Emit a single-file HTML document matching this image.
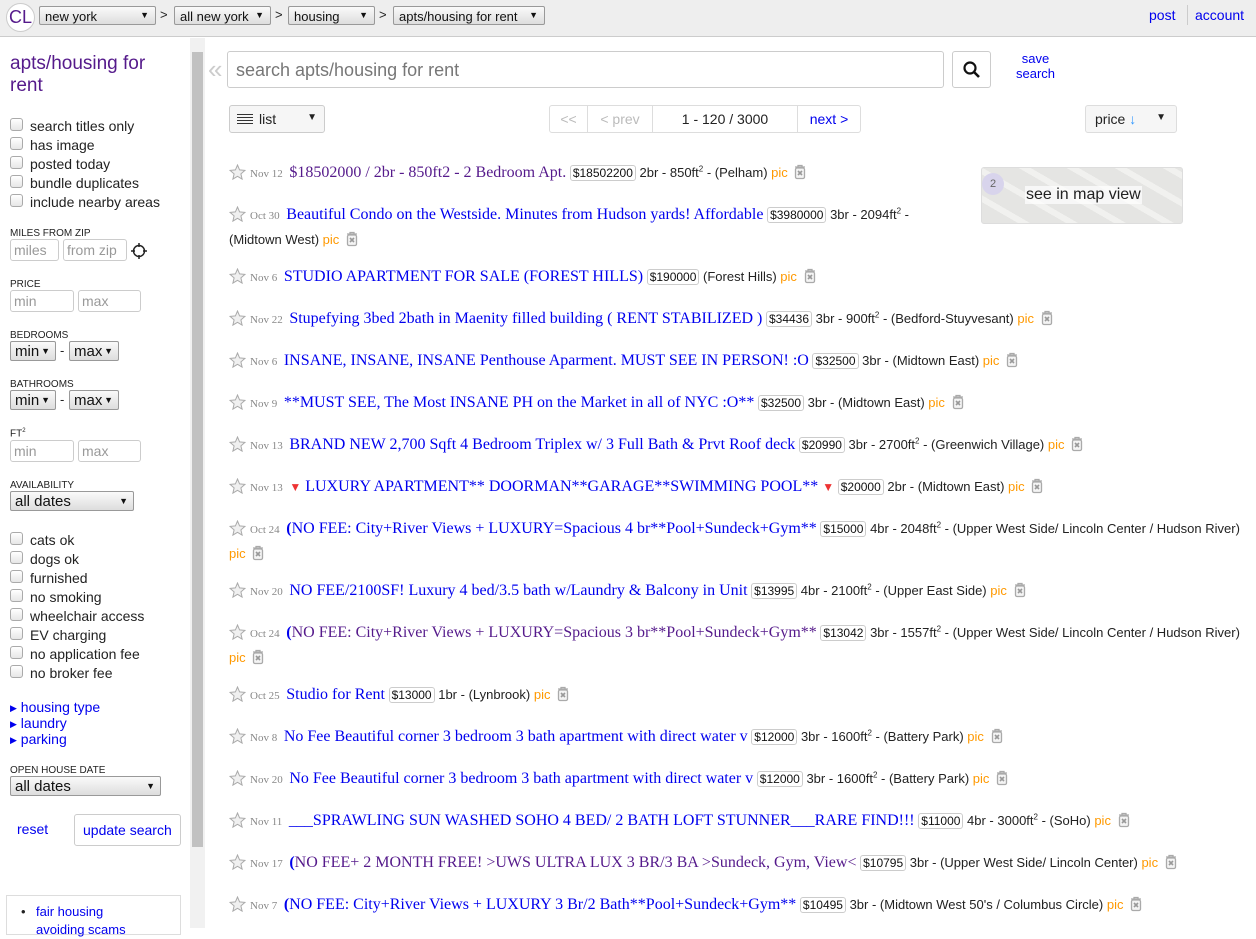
<!DOCTYPE html>
<html><head><meta charset="utf-8"><style>
*{box-sizing:border-box}
body{margin:0;width:1256px;height:928px;overflow:hidden;background:#fff;font-family:"Liberation Sans",sans-serif;color:#222;position:relative}
.a{position:absolute}
.hdr{left:0;top:0;width:1256px;height:37px;background:#eee;border-bottom:1px solid #ccc}
.sel{position:absolute;top:6px;height:19px;border:1px solid #999;border-radius:2px;background:linear-gradient(#fafafa,#ddd);font-size:13px;padding:2px 0 0 5px;color:#111}
.sel:after{content:"▼";position:absolute;right:6px;top:3px;font-size:9px}
.gt{position:absolute;top:7px;font-size:13px}
.blue{color:#00e}
.lbl{position:absolute;left:10px;font-size:10px;color:#222}
.inp{position:absolute;height:22px;border:1px solid #ccc;border-radius:3px;font-size:14px;color:#999;padding:2px 0 0 3px}
.ss{position:absolute;height:20px;border:1px solid #999;border-radius:2px;background:linear-gradient(#fafafa,#ddd);font-size:15px;padding:1px 0 0 4px;color:#111}
.ss:after{content:"▼";position:absolute;right:5px;top:4px;font-size:9px}
.cb{position:absolute;left:10px;width:13px;height:13px;border:1px solid #aaa;border-radius:3px;background:linear-gradient(#fff,#e6e6e6)}
.ct{position:absolute;left:30px;font-size:14px;color:#222}
.row{position:absolute;left:229px;width:1022px;line-height:23px;height:46px;font-size:13px;color:#222}
.row sup{line-height:0;font-size:8px}
.st{display:inline-block;width:17px;height:16px;vertical-align:-3px;margin-right:4px}
.dt{font-family:"Liberation Serif",serif;font-size:11px;color:#888;margin-right:3px}
.t{font-family:"Liberation Serif",serif;font-size:16px;color:#00e}
.v{color:#551a8b}
.pr{border:1px solid #ccc;border-radius:3px;padding:0 2px;font-size:12px;color:#111}
.pic{color:#f90}
.tr{display:inline-block;width:16px;height:16px;vertical-align:-3px;margin-left:1px}
.rd{color:#e33;font-size:12px}
.bar{color:#00e;font-weight:bold}
</style></head><body>
<svg width="0" height="0" style="position:absolute"><defs>
<symbol id="s" viewBox="0 0 17 16"><path d="M8.5 1l2.1 4.9 5.3.5-4 3.5 1.2 5.2-4.6-2.8-4.6 2.8 1.2-5.2-4-3.5 5.3-.5z" fill="#f0f0f0" stroke="#aaa" stroke-width="1"/></symbol>
<symbol id="x" viewBox="0 0 16 16"><path d="M3 3h10M6 3V1.5h4V3" fill="none" stroke="#aaa" stroke-width="1.3"/><rect x="3.5" y="4" width="9" height="10.5" rx="1.5" fill="#f4f4f4" stroke="#aaa" stroke-width="1.3"/><path d="M6 7l4 4M10 7l-4 4" stroke="#999" stroke-width="1.6"/></symbol>
</defs></svg>
<div class="a hdr"></div>
<div class="a" style="left:6px;top:3px;width:29px;height:29px;border-radius:50%;background:#fff;border:1px solid #ccc;color:#551a8b;font-size:18px;text-align:center;line-height:27px">CL</div>
<div class="sel" style="left:39px;width:117px">new york</div><span class="gt" style="left:160px">&gt;</span>
<div class="sel" style="left:174px;width:97px">all new york</div><span class="gt" style="left:275px">&gt;</span>
<div class="sel" style="left:288px;width:87px">housing</div><span class="gt" style="left:379px">&gt;</span>
<div class="sel" style="left:393px;width:152px">apts/housing for rent</div>
<div class="a blue" style="left:1149px;top:7px;font-size:14px">post</div>
<div class="a" style="left:1187px;top:5px;width:1px;height:20px;background:#ccc"></div>
<div class="a blue" style="left:1195px;top:7px;font-size:14px">account</div>

<!-- sidebar -->
<div class="a" style="left:10px;top:53px;font-size:19px;color:#551a8b;line-height:22px">apts/housing for<br>rent</div>
<div class="cb" style="top:118px"></div><div class="ct" style="top:118px">search titles only</div>
<div class="cb" style="top:137px"></div><div class="ct" style="top:137px">has image</div>
<div class="cb" style="top:156px"></div><div class="ct" style="top:156px">posted today</div>
<div class="cb" style="top:175px"></div><div class="ct" style="top:175px">bundle duplicates</div>
<div class="cb" style="top:194px"></div><div class="ct" style="top:194px">include nearby areas</div>
<div class="lbl" style="top:228px">MILES FROM ZIP</div>
<div class="inp" style="left:10px;top:239px;width:49px">miles</div>
<div class="inp" style="left:63px;top:239px;width:64px">from zip</div>
<svg class="a" style="left:131px;top:243px" width="16" height="16"><circle cx="8" cy="8" r="5.5" fill="none" stroke="#222" stroke-width="1.5"/><path d="M8 0v4M8 12v4M0 8h4M12 8h4" stroke="#222" stroke-width="1.5"/></svg>
<div class="lbl" style="top:279px">PRICE</div>
<div class="inp" style="left:10px;top:290px;width:64px">min</div>
<div class="inp" style="left:78px;top:290px;width:63px">max</div>
<div class="lbl" style="top:330px">BEDROOMS</div>
<div class="ss" style="left:10px;top:341px;width:46px">min</div><span class="a" style="left:60px;top:343px;font-size:13px">-</span>
<div class="ss" style="left:69px;top:341px;width:50px">max</div>
<div class="lbl" style="top:379px">BATHROOMS</div>
<div class="ss" style="left:10px;top:390px;width:46px">min</div><span class="a" style="left:60px;top:392px;font-size:13px">-</span>
<div class="ss" style="left:69px;top:390px;width:50px">max</div>
<div class="lbl" style="top:428px">FT<sup style="font-size:6px">2</sup></div>
<div class="inp" style="left:10px;top:440px;width:64px">min</div>
<div class="inp" style="left:78px;top:440px;width:63px">max</div>
<div class="lbl" style="top:480px">AVAILABILITY</div>
<div class="ss" style="left:10px;top:491px;width:124px">all dates</div>
<div class="cb" style="top:532px"></div><div class="ct" style="top:532px">cats ok</div>
<div class="cb" style="top:551px"></div><div class="ct" style="top:551px">dogs ok</div>
<div class="cb" style="top:570px"></div><div class="ct" style="top:570px">furnished</div>
<div class="cb" style="top:589px"></div><div class="ct" style="top:589px">no smoking</div>
<div class="cb" style="top:608px"></div><div class="ct" style="top:608px">wheelchair access</div>
<div class="cb" style="top:627px"></div><div class="ct" style="top:627px">EV charging</div>
<div class="cb" style="top:646px"></div><div class="ct" style="top:646px">no application fee</div>
<div class="cb" style="top:665px"></div><div class="ct" style="top:665px">no broker fee</div>
<div class="a blue" style="left:10px;top:699px;font-size:14px;line-height:16px">
<div style="height:16px"><span style="font-size:9px;vertical-align:1px">▶</span> housing type</div>
<div style="height:16px"><span style="font-size:9px;vertical-align:1px">▶</span> laundry</div>
<div style="height:16px"><span style="font-size:9px;vertical-align:1px">▶</span> parking</div></div>
<div class="lbl" style="top:765px">OPEN HOUSE DATE</div>
<div class="ss" style="left:10px;top:776px;width:151px">all dates</div>
<div class="a blue" style="left:17px;top:821px;font-size:14px">reset</div>
<div class="a blue" style="left:74px;top:814px;width:107px;height:32px;border:1px solid #ccc;border-radius:3px;font-size:14px;padding:7px 0 0 8px">update search</div>
<div class="a" style="left:6px;top:895px;width:175px;height:40px;border:1px solid #ddd;font-size:13px;line-height:18px">
<span style="position:absolute;left:14px;top:7px">•</span>
<span class="blue" style="position:absolute;left:29px;top:7px">fair housing</span>
<span class="blue" style="position:absolute;left:29px;top:25px">avoiding scams</span></div>

<!-- scrollbar -->
<div class="a" style="left:190px;top:38px;width:15px;height:890px;background:#f1f1f1"></div>
<div class="a" style="left:192px;top:52px;width:11px;height:795px;background:#c1c1c1"></div>

<!-- search -->
<div class="a" style="left:208px;top:56px;font-size:26px;color:#ccc;line-height:26px">«</div>
<div class="a" style="left:227px;top:51px;width:717px;height:37px;border:1px solid #ccc;border-radius:3px;font-size:18px;color:#777;padding:8px 0 0 8px">search apts/housing for rent</div>
<div class="a" style="left:952px;top:51px;width:39px;height:37px;border:1px solid #ccc;border-radius:3px">
<svg width="39" height="37" style="position:absolute;left:-1px;top:-1px"><circle cx="18" cy="17" r="5.5" fill="none" stroke="#111" stroke-width="2.2"/><path d="M22 21l5 5" stroke="#111" stroke-width="2.6"/></svg></div>
<div class="a blue" style="left:1016px;top:51px;font-size:13px;text-align:center;line-height:15px">save<br>search</div>

<div class="a" style="left:229px;top:105px;width:96px;height:28px;border:1px solid #ccc;border-radius:3px;background:#f6f6f6;font-size:14px;padding:5px 0 0 29px">list
<div style="position:absolute;left:7px;top:8px;width:16px;height:10px;border-top:1px solid #333;border-bottom:1px solid #333"><div style="margin-top:2px;height:4px;border-top:1px solid #333;border-bottom:1px solid #333"></div></div>
<span style="position:absolute;right:7px;top:6px;font-size:10px">▼</span></div>

<div class="a" style="left:549px;top:105px;width:312px;height:28px;border:1px solid #ddd;border-radius:3px;font-size:14px">
<span style="position:absolute;left:0;width:38px;height:26px;border-right:1px solid #ddd;color:#bbb;text-align:center;padding-top:5px">&lt;&lt;</span>
<span style="position:absolute;left:38px;width:65px;height:26px;border-right:1px solid #ddd;color:#bbb;text-align:center;padding-top:5px">&lt; prev</span>
<span style="position:absolute;left:103px;width:145px;height:26px;border-right:1px solid #ddd;color:#222;text-align:center;padding-top:5px">1 - 120 / 3000</span>
<span style="position:absolute;left:248px;width:62px;color:#00e;text-align:center;padding-top:5px">next &gt;</span></div>

<div class="a" style="left:1085px;top:105px;width:92px;height:28px;border:1px solid #ddd;border-radius:3px;background:#f6f6f6;font-size:14px;padding:5px 0 0 9px">price <span style="color:#39f">↓</span><span style="position:absolute;right:10px;top:6px;font-size:10px">▼</span></div>

<div class="a" style="left:981px;top:167px;width:202px;height:57px;border:1px solid #ddd;border-radius:3px;background:repeating-linear-gradient(30deg,#e5e5e3 0 18px,#f1f1ef 18px 24px);overflow:hidden">
<div style="position:absolute;left:0;top:5px;width:22px;height:22px;border-radius:50%;background:#d8d4ec;font-size:11px;color:#666;text-align:center;line-height:22px">2</div>
<div style="position:absolute;left:43px;top:18px;background:rgba(255,255,255,.7);font-size:16px;color:#222;padding:0 1px">see in map view</div></div>

<!-- rows -->
<div class="row" style="top:161px"><svg class="st"><use href="#s"/></svg><span class="dt">Nov 12</span> <span class="t v">$18502000 / 2br - 850ft2 - 2 Bedroom Apt.</span> <span class="pr">$18502200</span> 2br - 850ft<sup>2</sup> - (Pelham) <span class="pic">pic</span> <svg class="tr"><use href="#x"/></svg></div>
<div class="row" style="top:203px;width:690px"><svg class="st"><use href="#s"/></svg><span class="dt">Oct 30</span> <span class="t">Beautiful Condo on the Westside. Minutes from Hudson yards! Affordable</span> <span class="pr">$3980000</span> 3br - 2094ft<sup>2</sup> - (Midtown West) <span class="pic">pic</span> <svg class="tr"><use href="#x"/></svg></div>
<div class="row" style="top:265px"><svg class="st"><use href="#s"/></svg><span class="dt">Nov 6</span> <span class="t">STUDIO APARTMENT FOR SALE (FOREST HILLS)</span> <span class="pr">$190000</span> (Forest Hills) <span class="pic">pic</span> <svg class="tr"><use href="#x"/></svg></div>
<div class="row" style="top:307px"><svg class="st"><use href="#s"/></svg><span class="dt">Nov 22</span> <span class="t">Stupefying 3bed 2bath in Maenity filled building ( RENT STABILIZED )</span> <span class="pr">$34436</span> 3br - 900ft<sup>2</sup> - (Bedford-Stuyvesant) <span class="pic">pic</span> <svg class="tr"><use href="#x"/></svg></div>
<div class="row" style="top:349px"><svg class="st"><use href="#s"/></svg><span class="dt">Nov 6</span> <span class="t">INSANE, INSANE, INSANE Penthouse Aparment. MUST SEE IN PERSON! :O</span> <span class="pr">$32500</span> 3br - (Midtown East) <span class="pic">pic</span> <svg class="tr"><use href="#x"/></svg></div>
<div class="row" style="top:391px"><svg class="st"><use href="#s"/></svg><span class="dt">Nov 9</span> <span class="t">**MUST SEE, The Most INSANE PH on the Market in all of NYC :O**</span> <span class="pr">$32500</span> 3br - (Midtown East) <span class="pic">pic</span> <svg class="tr"><use href="#x"/></svg></div>
<div class="row" style="top:433px"><svg class="st"><use href="#s"/></svg><span class="dt">Nov 13</span> <span class="t">BRAND NEW 2,700 Sqft 4 Bedroom Triplex w/ 3 Full Bath &amp; Prvt Roof deck</span> <span class="pr">$20990</span> 3br - 2700ft<sup>2</sup> - (Greenwich Village) <span class="pic">pic</span> <svg class="tr"><use href="#x"/></svg></div>
<div class="row" style="top:475px"><svg class="st"><use href="#s"/></svg><span class="dt">Nov 13</span> <span class="t"><span class="rd">▼</span> LUXURY APARTMENT** DOORMAN**GARAGE**SWIMMING POOL** <span class="rd">▼</span></span> <span class="pr">$20000</span> 2br - (Midtown East) <span class="pic">pic</span> <svg class="tr"><use href="#x"/></svg></div>
<div class="row" style="top:517px"><svg class="st"><use href="#s"/></svg><span class="dt">Oct 24</span> <span class="t"><span class="bar">(</span>NO FEE: City+River Views + LUXURY=Spacious 4 br**Pool+Sundeck+Gym**</span> <span class="pr">$15000</span> 4br - 2048ft<sup>2</sup> - (Upper West Side/ Lincoln Center / Hudson River) <span class="pic">pic</span> <svg class="tr"><use href="#x"/></svg></div>
<div class="row" style="top:579px"><svg class="st"><use href="#s"/></svg><span class="dt">Nov 20</span> <span class="t">NO FEE/2100SF! Luxury 4 bed/3.5 bath w/Laundry &amp; Balcony in Unit</span> <span class="pr">$13995</span> 4br - 2100ft<sup>2</sup> - (Upper East Side) <span class="pic">pic</span> <svg class="tr"><use href="#x"/></svg></div>
<div class="row" style="top:621px"><svg class="st"><use href="#s"/></svg><span class="dt">Oct 24</span> <span class="t v"><span class="bar">(</span>NO FEE: City+River Views + LUXURY=Spacious 3 br**Pool+Sundeck+Gym**</span> <span class="pr">$13042</span> 3br - 1557ft<sup>2</sup> - (Upper West Side/ Lincoln Center / Hudson River) <span class="pic">pic</span> <svg class="tr"><use href="#x"/></svg></div>
<div class="row" style="top:683px"><svg class="st"><use href="#s"/></svg><span class="dt">Oct 25</span> <span class="t">Studio for Rent</span> <span class="pr">$13000</span> 1br - (Lynbrook) <span class="pic">pic</span> <svg class="tr"><use href="#x"/></svg></div>
<div class="row" style="top:725px"><svg class="st"><use href="#s"/></svg><span class="dt">Nov 8</span> <span class="t">No Fee Beautiful corner 3 bedroom 3 bath apartment with direct water v</span> <span class="pr">$12000</span> 3br - 1600ft<sup>2</sup> - (Battery Park) <span class="pic">pic</span> <svg class="tr"><use href="#x"/></svg></div>
<div class="row" style="top:767px"><svg class="st"><use href="#s"/></svg><span class="dt">Nov 20</span> <span class="t">No Fee Beautiful corner 3 bedroom 3 bath apartment with direct water v</span> <span class="pr">$12000</span> 3br - 1600ft<sup>2</sup> - (Battery Park) <span class="pic">pic</span> <svg class="tr"><use href="#x"/></svg></div>
<div class="row" style="top:809px"><svg class="st"><use href="#s"/></svg><span class="dt">Nov 11</span> <span class="t">___SPRAWLING SUN WASHED SOHO 4 BED/ 2 BATH LOFT STUNNER___RARE FIND!!!</span> <span class="pr">$11000</span> 4br - 3000ft<sup>2</sup> - (SoHo) <span class="pic">pic</span> <svg class="tr"><use href="#x"/></svg></div>
<div class="row" style="top:851px"><svg class="st"><use href="#s"/></svg><span class="dt">Nov 17</span> <span class="t v"><span class="bar">(</span>NO FEE+ 2 MONTH FREE! &gt;UWS ULTRA LUX 3 BR/3 BA &gt;Sundeck, Gym, View&lt;</span> <span class="pr">$10795</span> 3br - (Upper West Side/ Lincoln Center) <span class="pic">pic</span> <svg class="tr"><use href="#x"/></svg></div>
<div class="row" style="top:893px"><svg class="st"><use href="#s"/></svg><span class="dt">Nov 7</span> <span class="t"><span class="bar">(</span>NO FEE: City+River Views + LUXURY 3 Br/2 Bath**Pool+Sundeck+Gym**</span> <span class="pr">$10495</span> 3br - (Midtown West 50's / Columbus Circle) <span class="pic">pic</span> <svg class="tr"><use href="#x"/></svg></div>
</body></html>
